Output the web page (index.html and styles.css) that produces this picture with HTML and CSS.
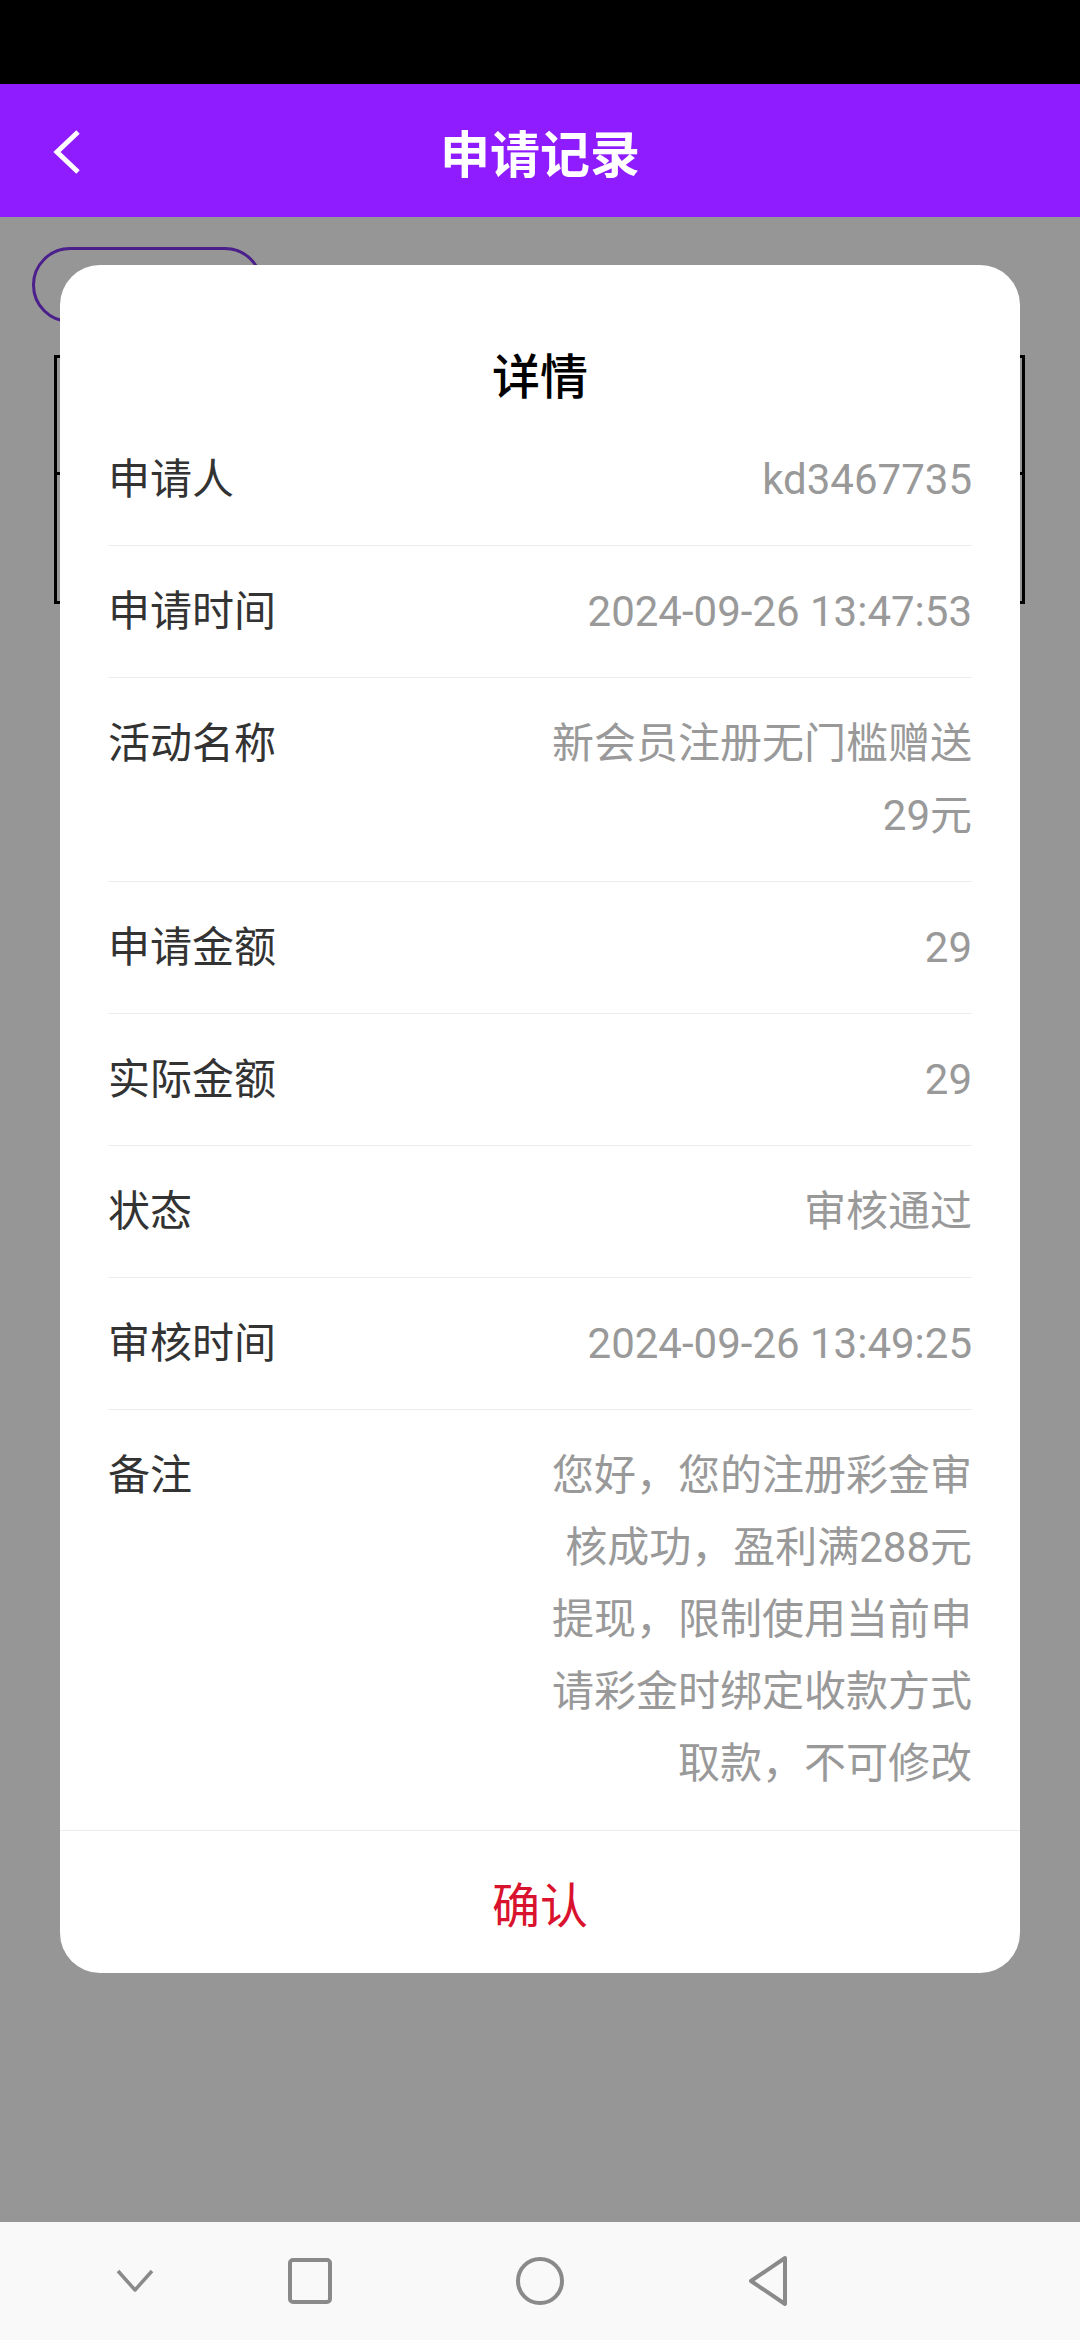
FILE: index.html
```html
<!DOCTYPE html>
<html lang="zh-CN">
<head>
  <meta charset="UTF-8">
  <meta name="viewport" content="width=device-width, initial-scale=1.0">
  <title>申请记录</title>
  <link rel="stylesheet" href="styles.css">
</head>
<body>

  <div class="status-bar"></div>

  <div class="topbar">
    <svg class="back-icon" width="30" height="48" viewBox="0 0 30 48">
      <polyline points="26,3 5,23 26,43" fill="none" stroke="#fff" stroke-width="5"/>
    </svg>
    <h1>申请记录</h1>
  </div>

  <div class="page">
    <!-- page under the dimmed overlay -->
    <div class="filter-pill">
      <svg width="20" height="20" viewBox="0 0 20 20">
        <polyline points="14,2 4,10" fill="none" stroke="#4b1f8c" stroke-width="3"/>
      </svg>
    </div>
    <div class="record-table">
      <div class="table-head"></div>
      <div class="table-row">
        <span class="status-btn"></span>
      </div>
    </div>

    <div class="overlay">
      <div class="modal">
        <h2 class="modal-title">详情</h2>
        <div class="detail-list">
          <div class="detail-row">
            <span class="label">申请人</span>
            <span class="value">kd3467735</span>
          </div>
          <div class="detail-row">
            <span class="label">申请时间</span>
            <span class="value">2024-09-26 13:47:53</span>
          </div>
          <div class="detail-row">
            <span class="label">活动名称</span>
            <span class="value">新会员注册无门槛赠送29元</span>
          </div>
          <div class="detail-row">
            <span class="label">申请金额</span>
            <span class="value">29</span>
          </div>
          <div class="detail-row">
            <span class="label">实际金额</span>
            <span class="value">29</span>
          </div>
          <div class="detail-row">
            <span class="label">状态</span>
            <span class="value">审核通过</span>
          </div>
          <div class="detail-row">
            <span class="label">审核时间</span>
            <span class="value">2024-09-26 13:49:25</span>
          </div>
          <div class="detail-row">
            <span class="label">备注</span>
            <span class="value">您好，您的注册彩金审核成功，盈利满288元提现，限制使用当前申请彩金时绑定收款方式取款，不可修改</span>
          </div>
        </div>
        <div class="modal-footer">
          <button class="confirm-button">确认</button>
        </div>
      </div>
    </div>
  </div>

  <div class="navbar">
    <span class="nav-slot nav-hide">
      <svg width="40" height="26" viewBox="0 0 40 26">
        <polyline points="3,3 20,22 37,3" fill="none" stroke="#8a8a8a" stroke-width="3.5" stroke-linejoin="round"/>
      </svg>
    </span>
    <span class="nav-slot nav-recent">
      <svg width="48" height="48" viewBox="0 0 48 48">
        <rect x="4" y="3" width="40" height="42" rx="3" fill="none" stroke="#8a8a8a" stroke-width="4"/>
      </svg>
    </span>
    <span class="nav-slot nav-home">
      <svg width="52" height="52" viewBox="0 0 52 52">
        <circle cx="26" cy="26" r="22" fill="none" stroke="#8a8a8a" stroke-width="4"/>
      </svg>
    </span>
    <span class="nav-slot nav-back">
      <svg width="48" height="52" viewBox="0 0 48 52">
        <path d="M40 3 L6 26 L40 49 Z" fill="none" stroke="#8a8a8a" stroke-width="4" stroke-linejoin="round"/>
      </svg>
    </span>
  </div>

</body>
</html>
```

FILE: styles.css
```css
body {
  margin: 0;
  width: 1080px;
  height: 2340px;
  display: flex;
  flex-direction: column;
  font-family: Roboto, "Noto Sans CJK SC", sans-serif;
  background-color: #969696;
  overflow: hidden;
}

.status-bar {
  height: 84px;
  background-color: #000;
}

.topbar {
  height: 133px;
  background-color: #8f1bff;
  display: flex;
  align-items: center;
  justify-content: center;
  position: relative;
}

.topbar h1 {
  margin: 0;
  color: #fff;
  font-size: 50px;
  font-weight: 700;
  letter-spacing: 0;
}

.back-icon {
  position: absolute;
  left: 52px;
  top: 45px;
}

.page {
  flex: 1;
  position: relative;
  background-color: #969696;
  padding-top: 30px;
}

.filter-pill {
  margin-left: 32px;
  width: 195px;
  height: 70px;
  border: 3px solid #4b1f8c;
  border-radius: 38px;
  display: flex;
  align-items: center;
  padding-left: 30px;
}

.record-table {
  margin: 32px 0 0 54px;
  width: 965px;
  border: 3px solid #000;
}

.table-head {
  height: 114px;
  border-bottom: 3px solid #000;
}

.table-row {
  height: 126px;
  display: flex;
  align-items: center;
  justify-content: flex-end;
}

.status-btn {
  width: 120px;
  height: 70px;
  border-radius: 20px;
  background-color: #0b5a2c;
  margin-right: 2px;
}

.overlay {
  position: absolute;
  top: 0;
  left: 0;
  right: 0;
  bottom: 0;
}

.modal {
  width: 960px;
  margin: 48px auto 0;
  background-color: #fff;
  border-radius: 40px;
  overflow: hidden;
}

.modal-title {
  margin: 0;
  padding-top: 77px;
  line-height: 72px;
  font-size: 48px;
  font-weight: 500;
  color: #000;
  text-align: center;
}

.detail-list {
  padding: 0 48px;
}

.detail-row {
  display: flex;
  justify-content: space-between;
  padding: 30px 0 29px;
  border-bottom: 1px solid #ededed;
  font-size: 42px;
  line-height: 72px;
}

.detail-row:last-child {
  border-bottom: none;
  padding-bottom: 30px;
}

.label {
  color: #333;
  white-space: nowrap;
}

.value {
  color: #999;
  text-align: right;
  max-width: 424px;
}

.modal-footer {
  border-top: 1px solid #ededed;
  height: 142px;
  display: flex;
  align-items: center;
  justify-content: center;
}

.confirm-button {
  border: none;
  background: transparent;
  font-family: Roboto, "Noto Sans CJK SC", sans-serif;
  font-size: 48px;
  color: #d9122e;
  padding: 0;
}

.navbar {
  height: 118px;
  background-color: #f9f9f9;
  display: flex;
  align-items: center;
  padding-left: 105px;
}

.nav-slot {
  width: 60px;
  display: flex;
  justify-content: center;
}

.nav-recent {
  margin-left: 115px;
}

.nav-home {
  margin-left: 170px;
}

.nav-back {
  margin-left: 169px;
}
```
